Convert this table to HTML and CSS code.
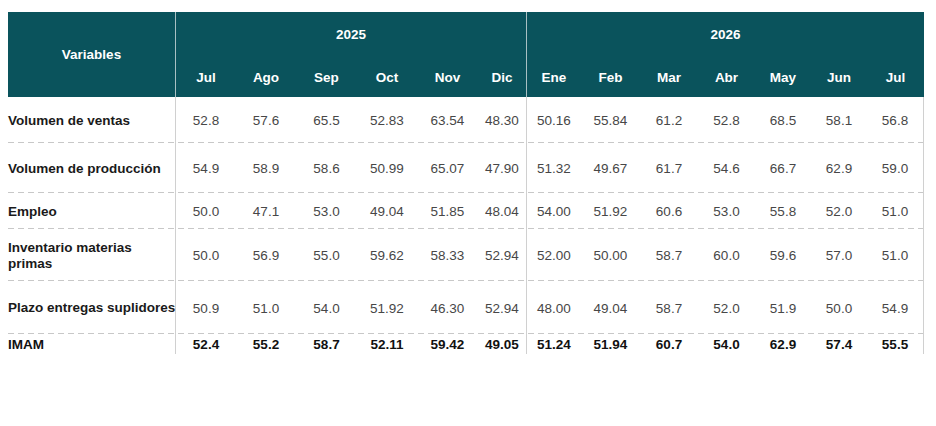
FILE: index.html
```html
<!DOCTYPE html>
<html lang="es">
<head>
<meta charset="utf-8">
<title>IMAM</title>
<link rel="stylesheet" href="styles.css">
</head>
<body>
<div class="tbl">
  <div class="head">
    <div class="h-var">Variables</div>
    <div class="h-year y25">2025</div>
    <div class="h-year y26">2026</div>
    <div class="m">Jul</div>
    <div class="m">Ago</div>
    <div class="m">Sep</div>
    <div class="m">Oct</div>
    <div class="m">Nov</div>
    <div class="m">Dic</div>
    <div class="m hsep">Ene</div>
    <div class="m">Feb</div>
    <div class="m">Mar</div>
    <div class="m">Abr</div>
    <div class="m">May</div>
    <div class="m">Jun</div>
    <div class="m">Jul</div>
  </div>

  <div class="row r1">
    <div class="c lab">Volumen de ventas</div>
    <div class="c">52.8</div><div class="c">57.6</div><div class="c">65.5</div><div class="c">52.83</div><div class="c">63.54</div><div class="c">48.30</div>
    <div class="c sep">50.16</div><div class="c">55.84</div><div class="c">61.2</div><div class="c">52.8</div><div class="c">68.5</div><div class="c">58.1</div><div class="c end">56.8</div>
  </div>

  <div class="row r2">
    <div class="c lab">Volumen de producción</div>
    <div class="c">54.9</div><div class="c">58.9</div><div class="c">58.6</div><div class="c">50.99</div><div class="c">65.07</div><div class="c">47.90</div>
    <div class="c sep">51.32</div><div class="c">49.67</div><div class="c">61.7</div><div class="c">54.6</div><div class="c">66.7</div><div class="c">62.9</div><div class="c end">59.0</div>
  </div>

  <div class="row r3">
    <div class="c lab">Empleo</div>
    <div class="c">50.0</div><div class="c">47.1</div><div class="c">53.0</div><div class="c">49.04</div><div class="c">51.85</div><div class="c">48.04</div>
    <div class="c sep">54.00</div><div class="c">51.92</div><div class="c">60.6</div><div class="c">53.0</div><div class="c">55.8</div><div class="c">52.0</div><div class="c end">51.0</div>
  </div>

  <div class="row r4">
    <div class="c lab">Inventario materias<br>primas</div>
    <div class="c">50.0</div><div class="c">56.9</div><div class="c">55.0</div><div class="c">59.62</div><div class="c">58.33</div><div class="c">52.94</div>
    <div class="c sep">52.00</div><div class="c">50.00</div><div class="c">58.7</div><div class="c">60.0</div><div class="c">59.6</div><div class="c">57.0</div><div class="c end">51.0</div>
  </div>

  <div class="row r5">
    <div class="c lab">Plazo entregas suplidores</div>
    <div class="c">50.9</div><div class="c">51.0</div><div class="c">54.0</div><div class="c">51.92</div><div class="c">46.30</div><div class="c">52.94</div>
    <div class="c sep">48.00</div><div class="c">49.04</div><div class="c">58.7</div><div class="c">52.0</div><div class="c">51.9</div><div class="c">50.0</div><div class="c end">54.9</div>
  </div>

  <div class="row r6 total">
    <div class="c lab">IMAM</div>
    <div class="c">52.4</div><div class="c">55.2</div><div class="c">58.7</div><div class="c">52.11</div><div class="c">59.42</div><div class="c">49.05</div>
    <div class="c sep">51.24</div><div class="c">51.94</div><div class="c">60.7</div><div class="c">54.0</div><div class="c">62.9</div><div class="c">57.4</div><div class="c end">55.5</div>
  </div>
</div>
</body>
</html>
```

FILE: styles.css
```css
* {
  box-sizing: border-box;
}

body {
  margin: 0;
  background: #ffffff;
  font-family: "Liberation Sans", Arial, sans-serif;
}

.tbl {
  margin: 12px 0 0 8px;
  width: 916px;
}

.head,
.row {
  display: grid;
  grid-template-columns: 168px 60px 60px 61px 60px 61px 48px 55px 59px 58px 57px 56px 56px 57px;
}

.head {
  grid-template-rows: 45px 40px;
  background: #0a535c;
  color: #ffffff;
  font-size: 13.5px;
  font-weight: 700;
}

.h-var {
  grid-row: 1 / 3;
  grid-column: 1;
  border-right: 1px solid #a9c0c3;
  display: flex;
  align-items: center;
  justify-content: center;
}

.h-year {
  display: flex;
  align-items: center;
  justify-content: center;
}

.y25 {
  grid-column: 2 / 8;
}

.y26 {
  grid-column: 8 / 15;
  border-left: 1px solid #a9c0c3;
}

.m {
  display: flex;
  align-items: center;
  justify-content: center;
}

.hsep {
  border-left: 1px solid #a9c0c3;
}

.row {
  font-size: 13.5px;
  color: #474747;
  background: repeating-linear-gradient(to right, #c8c8c8 0 6px, transparent 6px 10px) left bottom / 100% 1px no-repeat;
}

.row.total {
  background: none;
  color: #111111;
  font-weight: 700;
}

.r1 { height: 46px; }
.r2 { height: 50px; }
.r3 { height: 36px; }
.r4 { height: 52px; }
.r5 { height: 53px; }
.r6 { height: 20px; }

.c {
  display: flex;
  align-items: center;
  justify-content: center;
  padding-top: 2px;
  padding-bottom: 1px;
  white-space: nowrap;
}

.lab {
  justify-content: flex-start;
  font-weight: 700;
  color: #1a1a1a;
  line-height: 16px;
  border-right: 1px solid #d0d0d0;
}

.total .lab {
  color: #111111;
}

.sep {
  border-left: 1px solid #d0d0d0;
}

.end {
  border-right: 1px solid #d0d0d0;
}
```
